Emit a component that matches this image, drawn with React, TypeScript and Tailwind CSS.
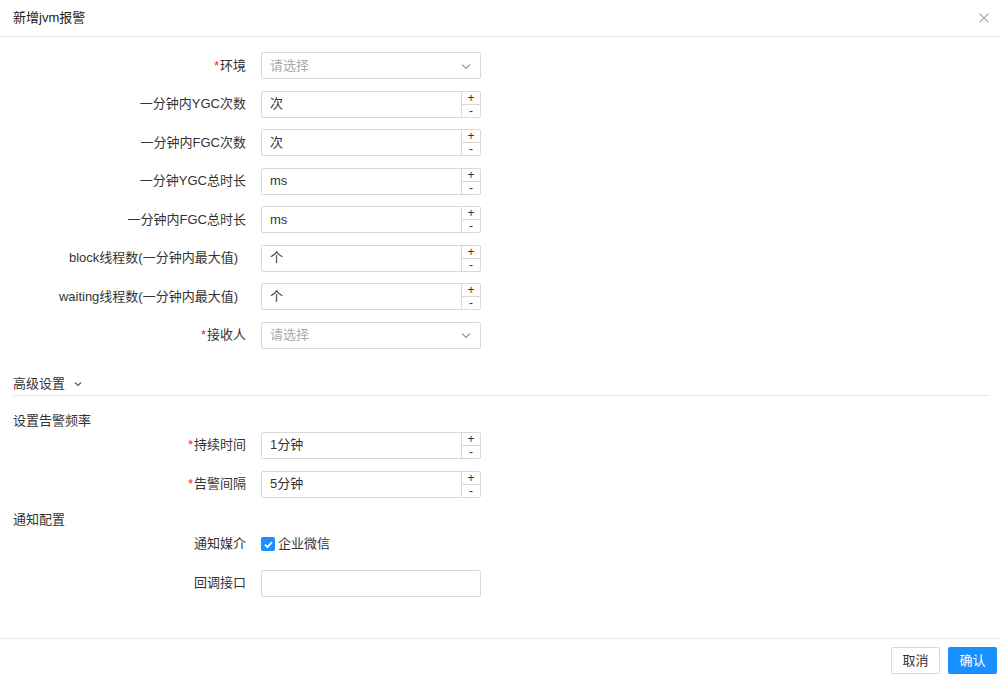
import React from "react";

const font = { fontFamily: '"Liberation Sans", "Noto Sans CJK SC", sans-serif' };

function Label({ text, required, pad }: { text: string; required?: boolean; pad?: boolean }) {
  return (
    <div className={`w-[233px] shrink-0 text-right text-[13px] text-[#333] leading-[20px] ${pad ? "pr-[8px]" : ""}`}>
      {required && <span className="text-[#f5222d] mr-[1px]">*</span>}
      {text}
    </div>
  );
}

function SelectBox() {
  return (
    <div className="w-[220px] h-[27px] border border-[#d9d9d9] rounded-[2px] flex items-center justify-between px-[8px] bg-white">
      <span className="text-[13px] text-[#aaa]">请选择</span>
      <svg width="12" height="12" viewBox="0 0 12 12" fill="none">
        <path d="M2 4.5l4 4 4-4" stroke="#999" strokeWidth="1.2" />
      </svg>
    </div>
  );
}

function NumberBox({ value }: { value: string }) {
  return (
    <div className="w-[220px] h-[27px] border border-[#d9d9d9] rounded-[2px] flex bg-white">
      <div className="flex-1 flex items-center px-[8px] text-[13px] text-[#333]">{value}</div>
      <div className="w-[19px] border-l border-[#d9d9d9] flex flex-col">
        <div className="flex-1 flex items-center justify-center text-[12px] leading-none text-[#333] border-b border-[#d9d9d9]">+</div>
        <div className="flex-1 flex items-center justify-center text-[12px] leading-none text-[#333]">-</div>
      </div>
    </div>
  );
}

function Row({ label, required, pad, children }: { label: string; required?: boolean; pad?: boolean; children: React.ReactNode }) {
  return (
    <div className="flex items-center h-[27px] gap-[15px]">
      <Label text={label} required={required} pad={pad} />
      {children}
    </div>
  );
}

export default function App() {
  return (
    <div className="w-[1001px] h-[680px] bg-white flex flex-col" style={font}>
      <div className="h-[37px] shrink-0 border-b border-[#e8e8e8] flex items-center justify-between pl-[13px] pr-[11px]">
        <span className="text-[13px] text-[#222]">新增jvm报警</span>
        <svg width="12" height="12" viewBox="0 0 12 12">
          <path d="M1.5 1.5l9 9M10.5 1.5l-9 9" stroke="#aaa" strokeWidth="1.1" />
        </svg>
      </div>

      <div className="flex-1 px-[13px] pt-[15px]">
        <div className="flex flex-col gap-[11.5px]">
          <Row label="环境" required>
            <SelectBox />
          </Row>
          <Row label="一分钟内YGC次数">
            <NumberBox value="次" />
          </Row>
          <Row label="一分钟内FGC次数">
            <NumberBox value="次" />
          </Row>
          <Row label="一分钟YGC总时长">
            <NumberBox value="ms" />
          </Row>
          <Row label="一分钟内FGC总时长">
            <NumberBox value="ms" />
          </Row>
          <Row label="block线程数(一分钟内最大值)" pad>
            <NumberBox value="个" />
          </Row>
          <Row label="waiting线程数(一分钟内最大值)" pad>
            <NumberBox value="个" />
          </Row>
          <Row label="接收人" required>
            <SelectBox />
          </Row>
        </div>

        <div className="mt-[25px] w-[977px] border-b border-[#e8e8e8] pb-[1px] flex items-center gap-[8px]">
          <span className="text-[13px] text-[#333] leading-[20px]">高级设置</span>
          <svg width="10" height="10" viewBox="0 0 10 10" fill="none">
            <path d="M2 3.5l3 3 3-3" stroke="#555" strokeWidth="1.1" />
          </svg>
        </div>

        <div className="mt-[15px] text-[13px] text-[#333] leading-[20px]">设置告警频率</div>
        <div className="mt-[1px] flex flex-col gap-[12px]">
          <Row label="持续时间" required>
            <NumberBox value="1分钟" />
          </Row>
          <Row label="告警间隔" required>
            <NumberBox value="5分钟" />
          </Row>
        </div>

        <div className="mt-[12px] text-[13px] text-[#333] leading-[20px]">通知配置</div>
        <div className="mt-[1px] flex flex-col gap-[12px]">
          <Row label="通知媒介">
            <label className="flex items-center gap-[3px] text-[13px] text-[#333]">
              <span className="w-[14px] h-[14px] rounded-[2px] bg-[#1890ff] flex items-center justify-center">
                <svg width="11" height="11" viewBox="0 0 10 10" fill="none">
                  <path d="M1.8 5.2l2.2 2.2 4.2-4.6" stroke="#fff" strokeWidth="1.6" />
                </svg>
              </span>
              企业微信
            </label>
          </Row>
          <Row label="回调接口">
            <div className="w-[220px] h-[27px] border border-[#d9d9d9] rounded-[2px] bg-white" />
          </Row>
        </div>
      </div>

      <div className="h-[42px] shrink-0 border-t border-[#e8e8e8] flex items-start justify-end gap-[8px] pt-[8px] pr-[4px]">
        <button className="w-[49px] h-[27px] border border-[#d9d9d9] rounded-[2px] bg-white text-[13px] text-[#333]">取消</button>
        <button className="w-[49px] h-[27px] rounded-[2px] bg-[#1890ff] text-[13px] text-white">确认</button>
      </div>
    </div>
  );
}
